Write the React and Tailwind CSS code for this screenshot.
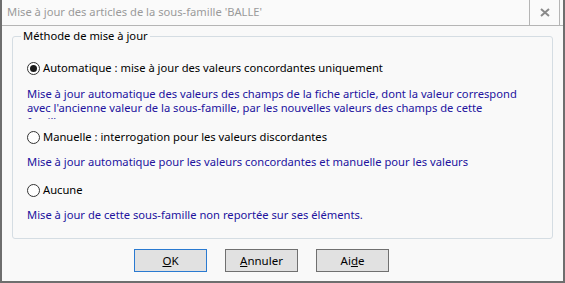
import React from 'react';

// Bouton radio dessiné à la main pour coller au rendu Windows.
const Radio = ({ checked }) => (
  <span className="flex items-center justify-center w-[13px] h-[13px] rounded-full border border-[#333333] bg-white shrink-0">
    {checked && <span className="w-[7px] h-[7px] rounded-full bg-[#1a1a1a]" />}
  </span>
);

const Option = ({ checked, label }) => (
  <div className="flex items-center h-[16px] gap-[3px] text-black whitespace-nowrap">
    <Radio checked={checked} />
    <span>{label}</span>
  </div>
);

const Bouton = ({ children, defaut }) => (
  <button
    className={
      'w-[73px] h-[23px] bg-[#e1e1e1] border text-black leading-none text-[11.5px] ' +
      (defaut ? 'border-[#2a7ad1]' : 'border-[#707070]')
    }
  >
    {children}
  </button>
);

export default function App() {
  return (
    <div
      className="w-[565px] h-[283px] bg-[#f9f9f9] border-l-2 border-r-2 border-b-2 border-[#6e6e6e] flex flex-col text-[11.2px]"
      style={{ fontFamily: '"Noto Sans", "Open Sans", sans-serif' }}
    >
      {/* Barre de titre */}
      <div className="h-[26px] flex items-stretch border-b border-[#b5b5b5] bg-[#fafafa]">
        <div className="flex-1 flex items-center pl-[5px] text-[#9a9a9a] text-[11.2px] whitespace-nowrap">
          Mise à jour des articles de la sous-famille 'BALLE'
        </div>
        <div className="w-[31px] flex items-center justify-center border-l border-r border-[#b5b5b5] mr-[3px]">
          <svg width="10" height="9" viewBox="0 0 10 9">
            <path d="M1 1 L9 8 M9 1 L1 8" stroke="#8a8a8a" strokeWidth="2" />
          </svg>
        </div>
      </div>

      {/* Cadre de la méthode */}
      <fieldset className="mx-[10px] mt-[2px] h-[211px] border border-[#d5dde3] rounded-[3px] px-[14px] pb-0">
        <legend className="ml-[-6px] px-[2px] leading-[16px] text-black whitespace-nowrap">Méthode de mise à jour</legend>
        <div className="flex flex-col mt-[16px] whitespace-nowrap">
          <Option checked label="Automatique : mise à jour des valeurs concordantes uniquement" />
          <div className="mt-[11px] h-[32px] overflow-hidden leading-[14px] text-[#22129e]">
            Mise à jour automatique des valeurs des champs de la fiche article, dont la valeur correspond
            <br />
            avec l'ancienne valeur de la sous-famille, par les nouvelles valeurs des champs de cette
            <br />
            famille.
          </div>
          <div className="mt-[10px]">
            <Option label="Manuelle : interrogation pour les valeurs discordantes" />
          </div>
          <div className="mt-[10px] h-[14px] leading-[14px] text-[#22129e] overflow-hidden">
            Mise à jour automatique pour les valeurs concordantes et manuelle pour les valeurs
          </div>
          <div className="mt-[13px]">
            <Option label="Aucune" />
          </div>
          <div className="mt-[10px] h-[14px] leading-[14px] text-[#22129e]">
            Mise à jour de cette sous-famille non reportée sur ses éléments.
          </div>
        </div>
      </fieldset>

      {/* Boutons */}
      <div className="flex gap-[18px] pl-[132px] mt-[10px]">
        <Bouton defaut>
          <span className="underline">O</span>K
        </Bouton>
        <Bouton>
          <span className="underline">A</span>nnuler
        </Bouton>
        <Bouton>
          Ai<span className="underline">d</span>e
        </Bouton>
      </div>
    </div>
  );
}
